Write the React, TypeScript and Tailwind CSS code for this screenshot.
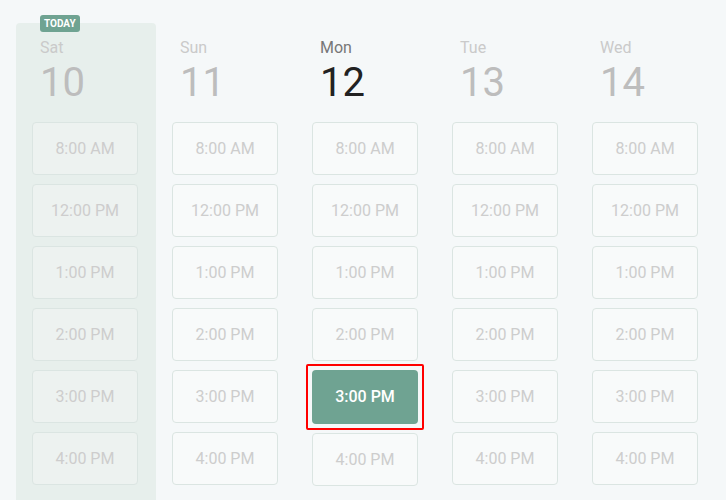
const days = [
  { name: 'Sat', num: 10, today: true },
  { name: 'Sun', num: 11 },
  { name: 'Mon', num: 12, active: true },
  { name: 'Tue', num: 13 },
  { name: 'Wed', num: 14 },
];

const times = ['8:00 AM', '12:00 PM', '1:00 PM', '2:00 PM', '3:00 PM', '4:00 PM'];

function DayColumn({ day }: { day: (typeof days)[number] }) {
  return (
    <div
      className={`relative flex w-[140px] flex-col rounded-t-[4px] pt-[15px] ${
        day.today ? 'bg-[#e7efec]' : ''
      }`}
    >
      {day.today && (
        <span className="absolute -top-[8px] left-[24px] rounded-[3px] bg-[#6fa392] px-[4px] py-[3px] text-[10px] font-bold leading-[11px] text-white">
          TODAY
        </span>
      )}
      <div className="px-6">
        <div className={`text-[16px] leading-[20px] ${day.active ? 'text-[#777]' : 'text-[#cacaca]'}`}>{day.name}</div>
        <div className={`mt-[5px] text-[40px] leading-[40px] ${day.active ? 'text-[#222]' : 'text-[#bdbdbd]'}`}>
          {day.num}
        </div>
      </div>
      <div className="mt-[19px] flex flex-col gap-[9px] pl-4">
        {times.map((t) => {
          const selected = day.active && t === '3:00 PM';
          if (selected) {
            return (
              <div key={t} className="relative w-[106px]">
                <button className="h-[54px] w-[106px] rounded-[4px] bg-[#6fa392] text-[16px] font-medium text-white">
                  {t}
                </button>
                <span className="pointer-events-none absolute -inset-[6px] rounded-[2px] border-2 border-[#f00]" />
              </div>
            );
          }
          return (
            <button
              key={t}
              className={`h-[53px] w-[106px] rounded-[4px] border border-[#dbe5e2] text-[16px] text-[#cdcdcd] ${
                day.today ? 'bg-[#edf2f0]' : 'bg-[#f8fafa]'
              }`}
            >
              {t}
            </button>
          );
        })}
      </div>
    </div>
  );
}

export default function App() {
  return (
    <div className="h-[500px] overflow-hidden bg-[#f5f8f9] pl-4 pt-[23px] font-['Roboto',sans-serif]">
      <div className="flex h-[520px]">
        {days.map((d) => (
          <DayColumn key={d.name} day={d} />
        ))}
      </div>
    </div>
  );
}
